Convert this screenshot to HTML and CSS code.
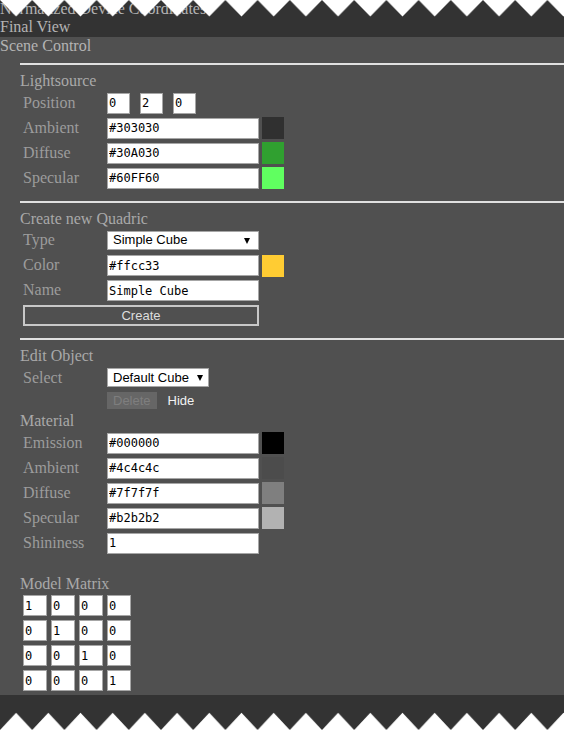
FILE: index.html
```html
<!DOCTYPE html>
<html lang="en">
  <head>
    <meta charset="UTF-8" />
    <title>Scene Control</title>
    <link rel="stylesheet" href="styles.css">
  </head>
  <body>
    <div class="views">
      <div class="view-title">Normalized Device Coordinates</div>
      <div class="view-title">Final View</div>
    </div>

    <div class="panel">
      <div class="panel-title">Scene Control</div>

      <hr class="rule" />
      <div class="group-title">Lightsource</div>
      <div class="row">
        <span class="label">Position</span>
        <div class="triple">
          <input class="field small" type="text" value="0" />
          <input class="field small" type="text" value="2" />
          <input class="field small" type="text" value="0" />
        </div>
      </div>
      <div class="row">
        <span class="label">Ambient</span>
        <input class="field wide" type="text" value="#303030" />
        <span class="swatch" style="background: #303030"></span>
      </div>
      <div class="row">
        <span class="label">Diffuse</span>
        <input class="field wide" type="text" value="#30A030" />
        <span class="swatch" style="background: #30a030"></span>
      </div>
      <div class="row">
        <span class="label">Specular</span>
        <input class="field wide" type="text" value="#60FF60" />
        <span class="swatch" style="background: #60ff60"></span>
      </div>

      <hr class="rule spaced" />
      <div class="group-title">Create new Quadric</div>
      <div class="row">
        <span class="label">Type</span>
        <div class="select wide-select">
          <span>Simple Cube</span>
          <span class="caret"></span>
        </div>
      </div>
      <div class="row">
        <span class="label">Color</span>
        <input class="field wide" type="text" value="#ffcc33" />
        <span class="swatch" style="background: #ffcc33"></span>
      </div>
      <div class="row">
        <span class="label">Name</span>
        <input class="field wide" type="text" value="Simple Cube" />
      </div>
      <div class="row">
        <button class="create-btn">Create</button>
      </div>

      <hr class="rule spaced" />
      <div class="group-title">Edit Object</div>
      <div class="row">
        <span class="label">Select</span>
        <div class="select">
          <span>Default Cube</span>
          <span class="caret"></span>
        </div>
      </div>
      <div class="row actions">
        <span class="label"></span>
        <button class="delete-btn" disabled>Delete</button>
        <button class="hide-btn">Hide</button>
      </div>

      <div class="group-title tight">Material</div>
      <div class="row">
        <span class="label">Emission</span>
        <input class="field wide" type="text" value="#000000" />
        <span class="swatch" style="background: #000000"></span>
      </div>
      <div class="row">
        <span class="label">Ambient</span>
        <input class="field wide" type="text" value="#4c4c4c" />
        <span class="swatch" style="background: #4c4c4c"></span>
      </div>
      <div class="row">
        <span class="label">Diffuse</span>
        <input class="field wide" type="text" value="#7f7f7f" />
        <span class="swatch" style="background: #7f7f7f"></span>
      </div>
      <div class="row">
        <span class="label">Specular</span>
        <input class="field wide" type="text" value="#b2b2b2" />
        <span class="swatch" style="background: #b2b2b2"></span>
      </div>
      <div class="row">
        <span class="label">Shininess</span>
        <input class="field wide" type="text" value="1" />
      </div>

      <div class="group-title matrix-title">Model Matrix</div>
      <div class="matrix">
        <input class="field cell" type="text" value="1" />
        <input class="field cell" type="text" value="0" />
        <input class="field cell" type="text" value="0" />
        <input class="field cell" type="text" value="0" />
        <input class="field cell" type="text" value="0" />
        <input class="field cell" type="text" value="1" />
        <input class="field cell" type="text" value="0" />
        <input class="field cell" type="text" value="0" />
        <input class="field cell" type="text" value="0" />
        <input class="field cell" type="text" value="0" />
        <input class="field cell" type="text" value="1" />
        <input class="field cell" type="text" value="0" />
        <input class="field cell" type="text" value="0" />
        <input class="field cell" type="text" value="0" />
        <input class="field cell" type="text" value="0" />
        <input class="field cell" type="text" value="1" />
      </div>
    </div>

    <!-- torn edges over the page -->
    <svg class="tear tear-top" width="100%" height="17">
      <defs>
        <pattern id="teethTop" width="32.2" height="17" patternUnits="userSpaceOnUse">
          <path d="M0 0 L16.1 16.6 L32.2 0 Z" fill="#fff" />
        </pattern>
      </defs>
      <rect width="100%" height="17" fill="url(#teethTop)" />
    </svg>
    <svg class="tear tear-bottom" width="100%" height="18">
      <defs>
        <pattern id="teethBottom" width="32.2" height="18" patternUnits="userSpaceOnUse">
          <path d="M0 18 L16.1 0.8 L32.2 18 Z" fill="#fff" />
        </pattern>
      </defs>
      <rect width="100%" height="18" fill="url(#teethBottom)" />
    </svg>
  </body>
</html>
```

FILE: styles.css
```css
body {
  margin: 0;
  min-height: 730px;
  background-color: #333;
  color: #a9a9a9;
  font-family: "Liberation Serif", "Times New Roman", serif;
  font-size: 16px;
  line-height: 18.4px;
}
.view-title {
  color: #b4b4b4;
}
.panel {
  background-color: #505050;
  padding: 0 0 4px 20px;
}
.panel-title {
  margin-left: -20px;
  color: #b4b4b4;
}
.rule {
  margin: 8px 0 0 0;
  height: 0;
  border: none;
  border-top: 2px solid #e0e0e0;
}
.rule.spaced {
  margin-top: 10px;
}
.group-title {
  margin-top: 7px;
}
.group-title.tight {
  margin-top: 0;
}
.group-title.matrix-title {
  margin-top: 19px;
}
.row {
  display: flex;
  align-items: center;
  height: 25px;
  padding-left: 3px;
}
.row.actions {
  height: 22px;
  align-items: flex-start;
  padding-top: 1.5px;
  box-sizing: border-box;
}
.label {
  width: 84px;
  flex: none;
  color: #9c9c9c;
}
.field {
  box-sizing: border-box;
  height: 21px;
  margin: 0;
  padding: 0 1px;
  border: 1px solid #a6a6a6;
  background: #fff;
  color: #000;
  font-family: "DejaVu Sans Mono", monospace;
  font-size: 12px;
  outline: none;
}
.field.wide {
  width: 152px;
}
.triple {
  display: flex;
  gap: 10px;
}
.field.small {
  width: 23px;
}
.swatch {
  width: 22px;
  height: 22px;
  margin-left: 3px;
}
.select {
  box-sizing: border-box;
  height: 19px;
  display: flex;
  align-items: center;
  gap: 8px;
  padding: 0 5px 0 5px;
  background: #fff;
  border: 1px solid #a6a6a6;
  color: #000;
  font-family: "Liberation Sans", Arial, sans-serif;
  font-size: 13px;
}
.wide-select {
  width: 152px;
  justify-content: space-between;
  padding-right: 8px;
}
.caret {
  width: 0;
  height: 0;
  border-left: 3px solid transparent;
  border-right: 3px solid transparent;
  border-top: 6px solid #000;
}
.create-btn {
  box-sizing: border-box;
  width: 236px;
  height: 21px;
  padding: 0;
  background: transparent;
  border: 2px solid #c8c8c8;
  color: #dedede;
  font-family: "Liberation Sans", Arial, sans-serif;
  font-size: 13px;
}
.delete-btn {
  height: 17px;
  padding: 0 6px;
  background: #666;
  border: none;
  color: #7e7e7e;
  font-family: "Liberation Sans", Arial, sans-serif;
  font-size: 13px;
}
.hide-btn {
  height: 17px;
  margin-left: 5px;
  padding: 0 6px;
  background: transparent;
  border: none;
  color: #f2f2f2;
  font-family: "Liberation Sans", Arial, sans-serif;
  font-size: 13px;
}
.matrix {
  display: grid;
  grid-template-columns: repeat(4, 24px);
  column-gap: 4px;
  row-gap: 4px;
  padding: 2px 0 0 3px;
}
.field.cell {
  width: 24px;
}
.tear {
  position: fixed;
  left: 0;
  display: block;
}
.tear-top {
  top: 0;
}
.tear-bottom {
  bottom: 0;
}
```
